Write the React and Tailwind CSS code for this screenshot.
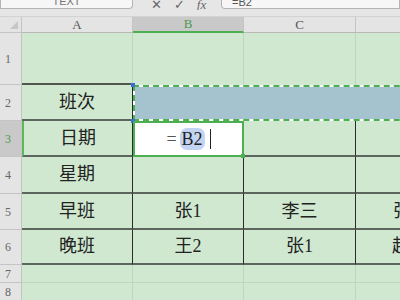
import React from 'react';

const cjk = { fontFamily: '"Liberation Serif", "Noto Sans CJK SC", serif' };

const RowHead = ({ n, active }) => (
    <div
        className={`flex items-center pl-[5px] border-b border-r border-[#c4c4c4] text-[12px] ${active ? 'bg-[#c9c9c9] text-[#4e9a4e]' : 'bg-[#e4e4e4] text-[#666]'}`}
        style={cjk}
    >
        {n}
    </div>
);

const ColHead = ({ label, active }) => (
    <div
        className={`flex items-center justify-center border-r border-[#c4c4c4] text-[13px] ${active ? 'bg-[#c9c9c9] text-[#4e9a4e] border-b-2 border-b-[#4caf50]' : 'bg-[#e4e4e4] text-[#555] border-b border-b-[#b8b8b8]'}`}
        style={cjk}
    >
        {label}
    </div>
);

const Cell = ({ children, className = 'justify-center' }) => (
    <div
        className={`flex items-center overflow-hidden whitespace-nowrap text-[18px] text-[#222] bg-[#cfe8cf] border-r border-r-[#2a2a2a] border-b-2 border-b-[#5d665d] ${className}`}
        style={cjk}
    >
        {children}
    </div>
);

const Blank = () => (
    <div className="bg-[#cfe8cf] border-r border-b border-[#bdd6bd]" />
);

const App = () => {
    return (
        <div className="w-[400px] h-[300px] overflow-hidden bg-[#e6e6e6]">
            {/* formula bar, scrolled so only its lower edge shows */}
            <div className="flex h-[10px] items-start overflow-hidden">
                <div className="w-[133px] h-[9px] shrink-0 bg-[#f6f6f6] border border-t-0 border-[#b4b4b4] rounded-br-[4px] flex justify-center overflow-hidden">
                    <span className="text-[11px] leading-none -mt-[4px] text-[#777]" style={{ fontFamily: '"Liberation Sans", sans-serif' }}>TEXT</span>
                </div>
                <div className="flex w-[88px] shrink-0 items-start gap-[12px] pl-[18px] -mt-[5px] text-[13px] text-[#666]" style={{ fontFamily: '"DejaVu Sans", sans-serif' }}>
                    <span>✕</span>
                    <span>✓</span>
                    <span className="italic" style={{ fontFamily: '"Liberation Serif", serif' }}>fx</span>
                </div>
                <div className="flex-1 h-[9px] bg-[#f6f6f6] border border-t-0 border-[#b4b4b4] rounded-bl-[4px] overflow-hidden pl-[10px]">
                    <span className="text-[11px] leading-none block -mt-[3px] text-[#555]" style={{ fontFamily: '"Liberation Sans", sans-serif' }}>=B2</span>
                </div>
            </div>
            <div className="h-[7px] bg-[#e6e6e6] border-b border-[#d2d2d2]" />

            <div className="grid w-[480px] grid-cols-[22px_111px_111px_112px_124px] grid-rows-[16px_52px_36px_36px_37px_36px_35px_18px_18px]">
                {/* header row */}
                <div className="relative bg-[#e4e4e4] border-r border-b border-[#c4c4c4]">
                    <div className="absolute right-[3px] bottom-[3px] w-0 h-0 border-l-[8px] border-l-transparent border-b-[8px] border-b-[#c6c6c6]" />
                </div>
                <ColHead label="A" />
                <ColHead label="B" active />
                <ColHead label="C" />
                <ColHead label="D" />

                {/* row 1 */}
                <RowHead n="1" />
                <div className="bg-[#cfe8cf] border-r border-r-[#bdd6bd] border-b-2 border-b-[#4f574f]" />
                <div className="bg-[#cfe8cf] border-r border-[#bdd6bd]" />
                <div className="bg-[#cfe8cf] border-r border-[#bdd6bd]" />
                <div className="bg-[#cfe8cf]" />

                {/* row 2 */}
                <RowHead n="2" />
                <Cell>班次</Cell>
                <div className="col-span-3 relative bg-white">
                    <div className="h-full bg-[#a5c3cf] bg-clip-padding border-2 border-dashed border-[#4caf50]" />
                    <div className="absolute -left-[2px] -top-[2px] w-[4px] h-[4px] bg-[#3b6fd6]" />
                    <div className="absolute -left-[2px] -bottom-[2px] w-[4px] h-[4px] bg-[#3b6fd6]" />
                </div>

                {/* row 3 */}
                <RowHead n="3" active />
                <Cell className="justify-center border-l-2 border-l-[#5cb85c] border-b-[#5cb85c]">日期</Cell>
                <div className="relative flex items-center justify-center gap-[3px] bg-white border-2 border-[#4caf50] text-[18px] text-[#222]" style={cjk}>
                    <span className="text-[#555]">=</span>
                    <span className="bg-[#c3d4f2] rounded-[7px] px-[2px] leading-[22px]">B2</span>
                    <span className="w-px h-[20px] bg-[#222] ml-[2px]" />
                    <div className="absolute -right-[3px] -bottom-[3px] w-[4px] h-[4px] bg-[#4caf50]" />
                </div>
                <Cell />
                <Cell />

                {/* row 4 */}
                <RowHead n="4" />
                <Cell>星期</Cell>
                <Cell />
                <Cell />
                <Cell />

                {/* row 5 */}
                <RowHead n="5" />
                <Cell>早班</Cell>
                <Cell>张1</Cell>
                <Cell>李三</Cell>
                <Cell className="justify-start pl-[37px]">张三</Cell>

                {/* row 6 */}
                <RowHead n="6" />
                <Cell>晚班</Cell>
                <Cell>王2</Cell>
                <Cell>张1</Cell>
                <Cell className="justify-start pl-[36px]">赵四</Cell>

                {/* rows 7, 8 */}
                <RowHead n="7" />
                <Blank />
                <Blank />
                <Blank />
                <Blank />
                <RowHead n="8" />
                <Blank />
                <Blank />
                <Blank />
                <Blank />
            </div>
        </div>
    );
};

export default App;
